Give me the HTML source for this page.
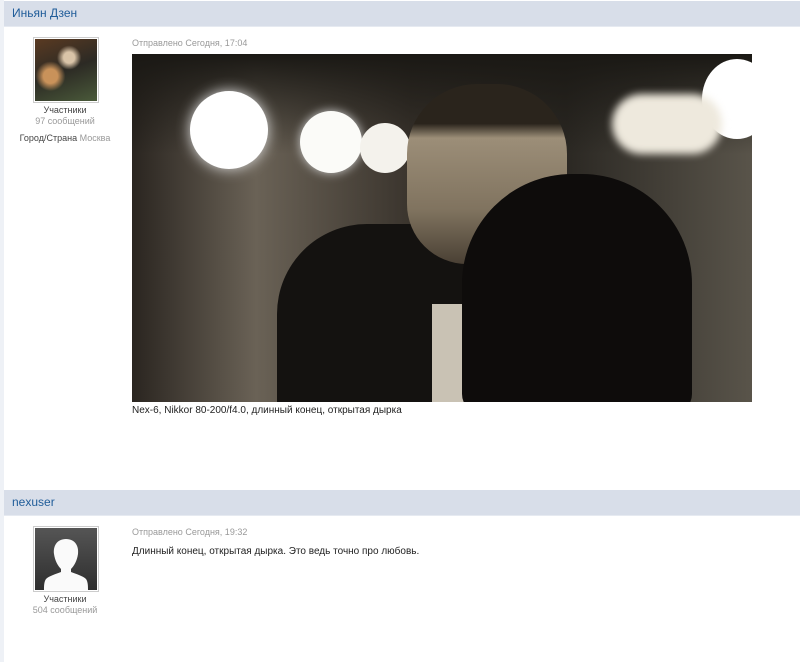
<!DOCTYPE html>
<html><head><meta charset="utf-8"><style>
body{margin:0;width:800px;height:662px;background:#fff;font-family:"Liberation Sans",Arial,sans-serif;position:relative;overflow:hidden}
.strip{position:absolute;left:0;top:0;width:4px;height:662px;background:#eef1f6}
.hdr{position:absolute;left:4px;right:0;height:25px;background:#d8dee9;color:#1f5c99;font-size:12px;line-height:25px;padding-left:8px;border-bottom:1px solid #e6eaf1}
.abs{position:absolute}
.c{text-align:center;width:130px;left:0;font-size:9px}
.g{color:#999}
.d{color:#444}
.date{color:#999;font-size:9px}
.av{position:absolute;left:33px;width:62px;height:62px;border:1px solid #ccc;padding:1px;background:#fff}
</style></head><body>
<div class="strip"></div>
<div class="hdr" style="top:1px">Иньян Дзен</div>
<div class="av" style="top:37px"><div style="width:62px;height:62px;background:radial-gradient(circle at 55% 30%,#d9c4a8 0 10%,transparent 22%),radial-gradient(circle at 25% 60%,#c9925a 0 12%,transparent 25%),linear-gradient(160deg,#5a3a22,#2c2a24 50%,#4a5a3a)"></div></div>
<div class="abs c d" style="top:105px">Участники</div>
<div class="abs c g" style="top:116px">97 сообщений</div>
<div class="abs c" style="top:133px"><span class="d">Город/Страна</span> <span class="g">Москва</span></div>
<div class="abs date" style="left:132px;top:38px">Отправлено Сегодня, 17:04</div>
<div class="abs" style="left:132px;top:54px;width:620px;height:348px;overflow:hidden;background:linear-gradient(90deg,#2a2520 0%,#6a6256 20%,#3a342d 45%,#2b2823 70%,#59544a 100%)">
 <div class="abs" style="left:0;top:0;width:620px;height:100px;background:linear-gradient(180deg,#1a1814,rgba(0,0,0,0))"></div>
 <div class="abs" style="left:58px;top:37px;width:78px;height:78px;border-radius:50%;background:#fff;box-shadow:0 0 14px #ddd"></div>
 <div class="abs" style="left:168px;top:57px;width:62px;height:62px;border-radius:50%;background:#fbfbf8;box-shadow:0 0 10px #ccc"></div>
 <div class="abs" style="left:228px;top:69px;width:50px;height:50px;border-radius:50%;background:#f4f2ec"></div>
 <div class="abs" style="left:570px;top:5px;width:70px;height:80px;border-radius:50%;background:#fff"></div>
 <div class="abs" style="left:480px;top:40px;width:110px;height:60px;border-radius:40px;background:#eee9dd;filter:blur(4px)"></div>
 <div class="abs" style="left:145px;top:170px;width:280px;height:190px;border-radius:90px 90px 0 0;background:#141210"></div>
 <div class="abs" style="left:275px;top:30px;width:160px;height:180px;border-radius:70px 70px 60px 60px;background:linear-gradient(180deg,#2a241c 0 22%,#9c8e78 30%,#80735f 70%,#4a4034)"></div>
 <div class="abs" style="left:300px;top:250px;width:70px;height:100px;background:#c9c2b4"></div>
 <div class="abs" style="left:330px;top:120px;width:230px;height:240px;border-radius:110px 110px 20px 20px;background:#0e0c0b"></div>
</div>
<div class="abs" style="left:132px;top:405px;font-size:10px;color:#222">Nex-6, Nikkor 80-200/f4.0, длинный конец, открытая дырка</div>
<div class="hdr" style="top:490px">nexuser</div>
<div class="av" style="top:526px"><svg width="62" height="62" viewBox="0 0 62 62"><defs><linearGradient id="a" x1="0" y1="0" x2="0" y2="1"><stop offset="0" stop-color="#555"/><stop offset="1" stop-color="#2e2e2e"/></linearGradient></defs><rect width="62" height="62" fill="url(#a)"/><path d="M31 11c-9 0-13 7-12 15 1 7 4 12 7 15v3c-5 2-12 4-15 7-2 3-2 7-2 11h44c0-4 0-8-2-11-3-3-10-5-15-7v-3c3-3 6-8 7-15 1-8-3-15-12-15z" fill="#fafafa"/></svg></div>
<div class="abs c d" style="top:594px">Участники</div>
<div class="abs c g" style="top:605px">504 сообщений</div>
<div class="abs date" style="left:132px;top:527px">Отправлено Сегодня, 19:32</div>
<div class="abs" style="left:132px;top:546px;font-size:10px;color:#222">Длинный конец, открытая дырка. Это ведь точно про любовь.</div>
</body></html>
